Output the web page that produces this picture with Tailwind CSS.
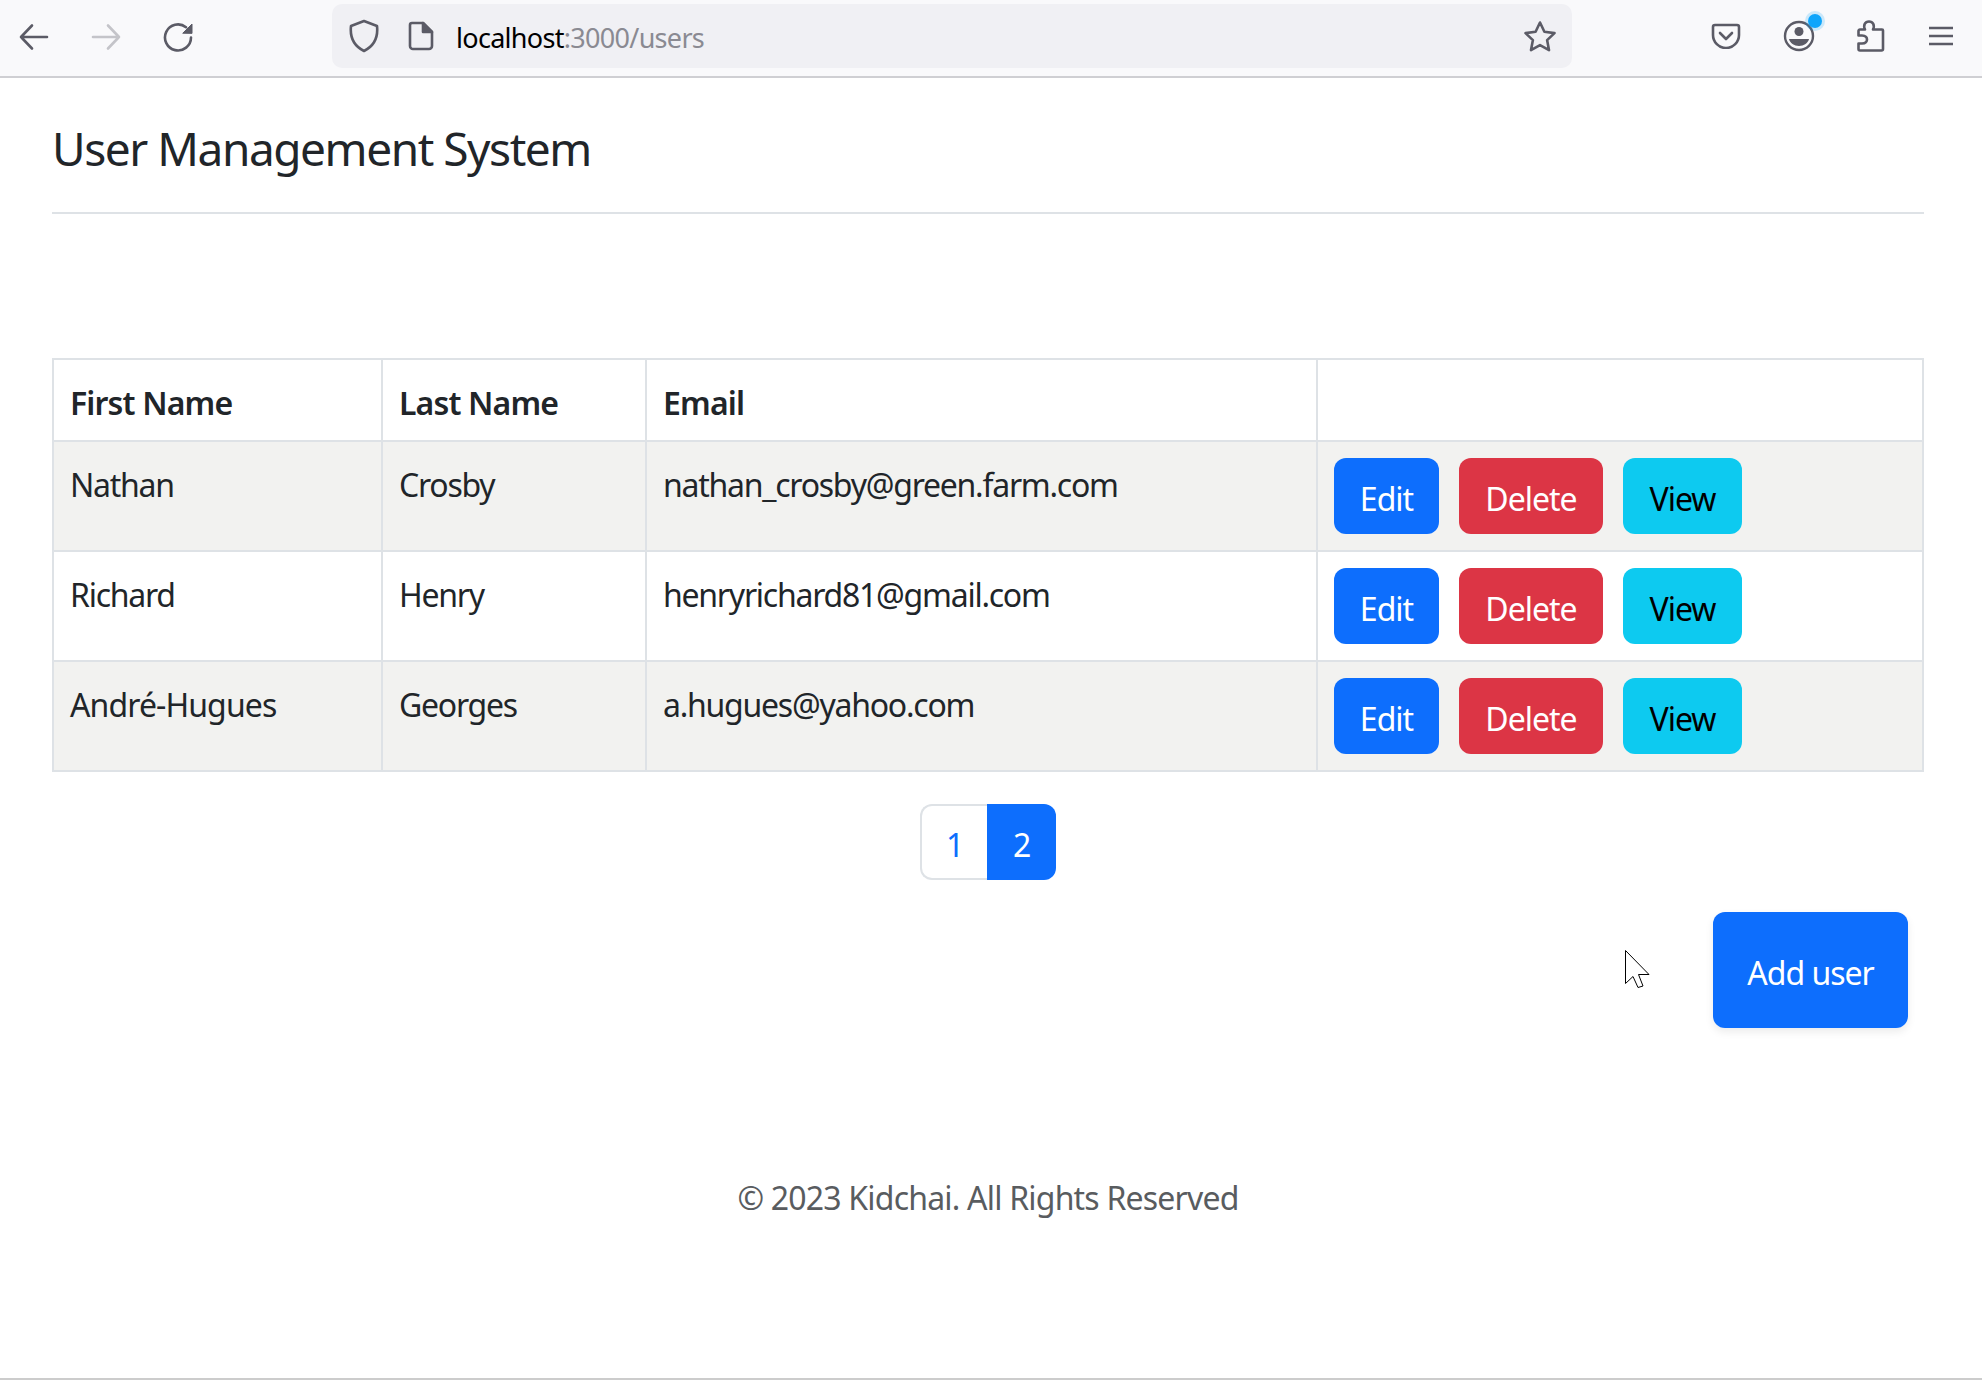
<!DOCTYPE html>
<html lang="en">
<head>
  <meta charset="UTF-8">
  <meta name="viewport" content="width=device-width, initial-scale=1.0">
  <title>User Management System</title>
  <script src="https://cdn.jsdelivr.net/npm/@tailwindcss/browser@4"></script>
</head>
<body class="relative flex flex-col h-[1380px] overflow-hidden bg-white border-b-2 border-[#cccccc] font-['Noto_Sans',sans-serif] text-[#212529] text-[32px] tracking-[-1.25px]">

  <!-- Browser toolbar -->
  <div class="flex items-center h-[78px] shrink-0 bg-[#f9f9fb] border-b-2 border-[#cfcfd3] pb-[4px] tracking-normal">
    <svg class="ml-[18px] w-[32px] h-[32px]" viewBox="0 0 32 32" fill="none" stroke="#5b5b66" stroke-width="2.6" stroke-linecap="round" stroke-linejoin="round"><path d="M3 17h26M14 5.500 3 17l11 11.500"/></svg>
    <svg class="ml-[40px] w-[32px] h-[32px]" viewBox="0 0 32 32" fill="none" stroke="#c4c4c9" stroke-width="2.6" stroke-linecap="round" stroke-linejoin="round"><path d="M3 17h26M18 5.500 29 17 18 28.500"/></svg>
    <svg class="ml-[40px] w-[32px] h-[32px]" viewBox="0 0 32 32" fill="none" stroke="#5b5b66" stroke-width="2.6" stroke-linecap="round"><path d="M24 7.200A13 13 0 1 0 29 17.500"/><path d="M21 13 30 4V13Z" fill="#5b5b66" stroke="#5b5b66" stroke-width="1" stroke-linejoin="round"/></svg>

    <div class="ml-[138px] flex items-center w-[1240px] h-[64px] rounded-[10px] bg-[#f0f0f4]">
      <svg class="ml-[16px] w-[32px] h-[34px]" viewBox="0 0 32 34" fill="none" stroke="#5b5b66" stroke-width="2.6" stroke-linejoin="round"><path d="M16 2 29 7c1 9-1 19-13 25C4 26 2 16 3 7Z"/></svg>
      <svg class="ml-[28px] w-[26px] h-[30px]" viewBox="0 0 26 30" fill="none" stroke="#5b5b66" stroke-width="2.6" stroke-linejoin="round"><path d="M4 2h11l9 9v14a3 3 0 0 1-3 3H5a3 3 0 0 1-3-3V4a2 2 0 0 1 2-2Z"/><path d="M15 2l9 9h-9Z" fill="#5b5b66"/></svg>
      <span class="ml-[22px] pt-[4px] text-[27px] tracking-[-0.7px] text-black">localhost<span class="text-[#8a8a92]">:3000/users</span></span>
      <svg class="ml-auto mr-[15px] w-[34px] h-[32px]" viewBox="0 0 34 32" fill="none" stroke="#5b5b66" stroke-width="2.6" stroke-linejoin="round"><path d="M17 2.500l4.400 9.300 10.100 1.300-7.400 7 1.900 10-9-5-9 5 1.900-10-7.400-7 10.100-1.300Z"/></svg>
    </div>

    <svg class="ml-[139px] w-[30px] h-[26px]" viewBox="0 0 30 26" fill="none" stroke="#5b5b66" stroke-width="2.6" stroke-linecap="round" stroke-linejoin="round"><path d="M4 2h22a2 2 0 0 1 2 2v8a13 13 0 0 1-26 0V4a2 2 0 0 1 2-2Z"/><path d="M9 10l6 6 6-6"/></svg>
    <div class="relative ml-[42px] w-[32px] h-[32px]">
      <svg class="w-[32px] h-[32px]" viewBox="0 0 32 32" fill="none" stroke="#5b5b66" stroke-width="2.400"><circle cx="16" cy="16" r="14"/><circle cx="16" cy="11.500" r="4.500" fill="#5b5b66" stroke="none"/><path d="M6 19h20c-1 4-5 7-10 7s-9-3-10-7Z" fill="#5b5b66" stroke="none"/></svg>
      <span class="absolute top-[-6px] right-[-7px] w-[14px] h-[14px] rounded-full bg-[#0ea5fb] ring-[3px] ring-[#0ea5fb]/20"></span>
    </div>
    <svg class="ml-[42px] w-[28px] h-[32px]" viewBox="0 0 28 32" fill="none" stroke="#5b5b66" stroke-width="2.6" stroke-linejoin="round"><path d="M3 9.500H8C6 5 8 1.500 12 1.500S18 5 16 9.500H25a1 1 0 0 1 1 1V29a1.500 1.500 0 0 1-1.500 1.500H3A1.500 1.500 0 0 1 1.500 29V23.500H5C9 23.500 10 21 10 19.500S9 15.500 5 15.500H1.500V11A1.500 1.500 0 0 1 3 9.500Z"/></svg>
    <svg class="ml-[44px] w-[24px] h-[20px]" viewBox="0 0 24 20" fill="none" stroke="#5b5b66" stroke-width="2.6"><path d="M0 2h24M0 10h24M0 18h24"/></svg>
  </div>

  <!-- Page content -->
  <div class="flex-1 flex flex-col pl-[52px] pr-[58px]">
    <h1 class="pt-[30px] pb-[24px] border-b-2 border-[#dee2e6] text-[46px] leading-[80px] tracking-[-1.45px] font-normal">User Management System</h1>

    <table class="mt-[144px] w-[1872px] table-fixed border-collapse">
      <thead>
        <tr class="h-[82px] text-left align-top tracking-[-0.85px]">
          <th class="w-[329px] px-[16px] pt-[19px] pb-[13px] leading-[48px] font-semibold border-2 border-[#dee2e6]">First Name</th>
          <th class="w-[264px] px-[16px] pt-[19px] pb-[13px] leading-[48px] font-semibold border-2 border-[#dee2e6]">Last Name</th>
          <th class="w-[671px] px-[16px] pt-[19px] pb-[13px] leading-[48px] font-semibold border-2 border-[#dee2e6]">Email</th>
          <th class="p-[16px] border-2 border-[#dee2e6]"></th>
        </tr>
      </thead>
      <tbody>
        <tr class="h-[110px] align-top bg-[#f2f2f0]">
          <td class="px-[16px] pt-[19px] pb-[13px] leading-[48px] border-2 border-[#dee2e6]">Nathan</td>
          <td class="px-[16px] pt-[19px] pb-[13px] leading-[48px] border-2 border-[#dee2e6]">Crosby</td>
          <td class="px-[16px] pt-[19px] pb-[13px] leading-[48px] border-2 border-[#dee2e6]">nathan_crosby@green.farm.com</td>
          <td class="p-[16px] border-2 border-[#dee2e6]">
            <div class="flex gap-[20px] tracking-[-1px]">
              <button class="w-[105px] h-[76px] pt-[6px] rounded-[12px] bg-[#0d6efd] text-white">Edit</button>
              <button class="w-[144px] h-[76px] pt-[6px] rounded-[12px] bg-[#dc3545] text-white">Delete</button>
              <button class="w-[119px] h-[76px] pt-[6px] rounded-[12px] bg-[#0dcaf0] text-black">View</button>
            </div>
          </td>
        </tr>
        <tr class="h-[110px] align-top">
          <td class="px-[16px] pt-[19px] pb-[13px] leading-[48px] border-2 border-[#dee2e6]">Richard</td>
          <td class="px-[16px] pt-[19px] pb-[13px] leading-[48px] border-2 border-[#dee2e6]">Henry</td>
          <td class="px-[16px] pt-[19px] pb-[13px] leading-[48px] border-2 border-[#dee2e6]">henryrichard81@gmail.com</td>
          <td class="p-[16px] border-2 border-[#dee2e6]">
            <div class="flex gap-[20px] tracking-[-1px]">
              <button class="w-[105px] h-[76px] pt-[6px] rounded-[12px] bg-[#0d6efd] text-white">Edit</button>
              <button class="w-[144px] h-[76px] pt-[6px] rounded-[12px] bg-[#dc3545] text-white">Delete</button>
              <button class="w-[119px] h-[76px] pt-[6px] rounded-[12px] bg-[#0dcaf0] text-black">View</button>
            </div>
          </td>
        </tr>
        <tr class="h-[110px] align-top bg-[#f2f2f0]">
          <td class="px-[16px] pt-[19px] pb-[13px] leading-[48px] tracking-[-0.9px] border-2 border-[#dee2e6]">André-Hugues</td>
          <td class="px-[16px] pt-[19px] pb-[13px] leading-[48px] border-2 border-[#dee2e6]">Georges</td>
          <td class="px-[16px] pt-[19px] pb-[13px] leading-[48px] border-2 border-[#dee2e6]">a.hugues@yahoo.com</td>
          <td class="p-[16px] border-2 border-[#dee2e6]">
            <div class="flex gap-[20px] tracking-[-1px]">
              <button class="w-[105px] h-[76px] pt-[6px] rounded-[12px] bg-[#0d6efd] text-white">Edit</button>
              <button class="w-[144px] h-[76px] pt-[6px] rounded-[12px] bg-[#dc3545] text-white">Delete</button>
              <button class="w-[119px] h-[76px] pt-[6px] rounded-[12px] bg-[#0dcaf0] text-black">View</button>
            </div>
          </td>
        </tr>
      </tbody>
    </table>

    <!-- Pagination -->
    <div class="mt-[32px] flex justify-center">
      <a class="flex items-center justify-center w-[67px] h-[76px] pt-[6px] rounded-l-[12px] border-2 border-r-0 border-[#dee2e6] text-[#0d6efd]">1</a>
      <a class="flex items-center justify-center w-[69px] h-[76px] pt-[6px] rounded-r-[12px] bg-[#0d6efd] text-white">2</a>
    </div>

    <div class="mt-[32px] flex justify-end pr-[16px]">
      <button class="w-[195px] h-[116px] pt-[6px] rounded-[12px] bg-[#0d6efd] text-white tracking-[-1px] shadow-[0_4px_8px_rgba(0,0,0,0.08)]">Add user</button>
    </div>

    <p class="mt-[146px] leading-[48px] text-center text-[#595c5f] tracking-[-0.8px]">© 2023 Kidchai. All Rights Reserved</p>
  </div>

  <!-- Mouse pointer over the page -->
  <svg class="absolute left-[1624px] top-[949px] w-[27px] h-[40px]" viewBox="0 0 27 40" fill="#ffffff" stroke="#000000" stroke-width="1"><path d="M1.500 1.500V34.500L9 27.500 14 38.500 19 37 14.500 25.500H25Z"/></svg>
</body>
</html>
